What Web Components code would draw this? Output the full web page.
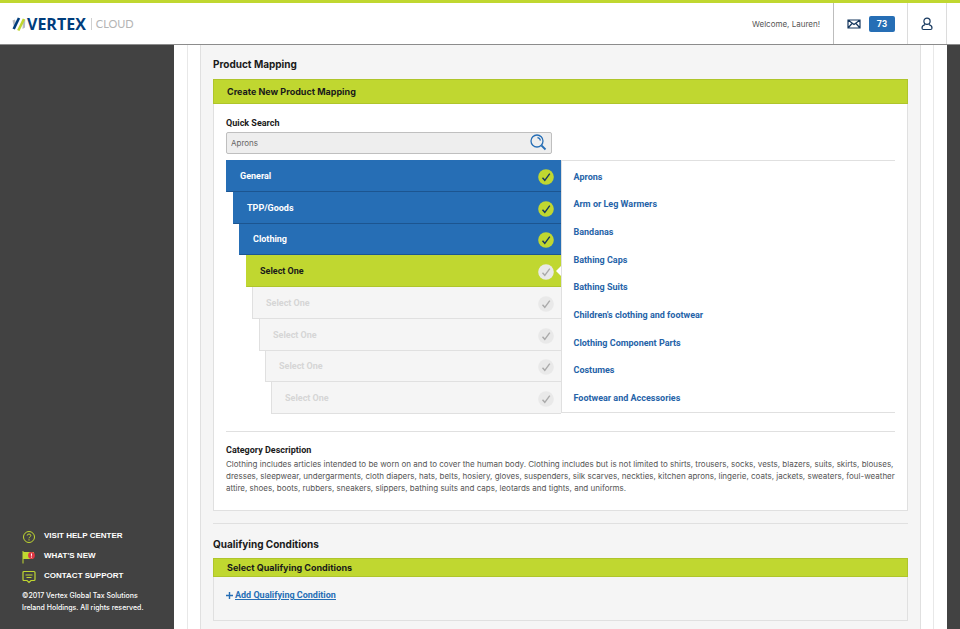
<!DOCTYPE html>
<html lang="en">
<head>
<meta charset="utf-8">
<title>Vertex Cloud – Product Mapping</title>
<style>
  html, body { margin: 0; height: 100%; }
  body {
    --lime: #c0d730; --lime-edge: #afc52b; --blue: #266eb5; --navy: #003d7c;
    --line: #e0e0e0; --panel: #f5f5f5; --dark: #424242; --ink: #1a1a1a;
    --heading: Inter, "Open Sans", sans-serif;
    --copy: Inter, "Liberation Sans", sans-serif;
    font: 9px/12px Roboto, "Liberation Sans", sans-serif;
    color: var(--ink);
    background: var(--dark);
  }
</style>
</head>
<body>
<app-shell>
  <app-header slot="header" user="Lauren" messages="73"></app-header>
  <side-bar slot="side"></side-bar>
  <page-section heading="Product Mapping">
    <title-card label="Create New Product Mapping" tone="white">
      <quick-search value="Aprons"></quick-search>
      <category-picker>
        <category-step slot="step" state="done" indent="0">General</category-step>
        <category-step slot="step" state="done" indent="7">TPP/Goods</category-step>
        <category-step slot="step" state="done" indent="13">Clothing</category-step>
        <category-step slot="step" state="current" indent="20">Select One</category-step>
        <category-step slot="step" state="idle" indent="26">Select One</category-step>
        <category-step slot="step" state="idle" indent="33">Select One</category-step>
        <category-step slot="step" state="idle" indent="39">Select One</category-step>
        <category-step slot="step" state="idle" indent="45">Select One</category-step>
        <category-option>Aprons</category-option>
        <category-option>Arm or Leg Warmers</category-option>
        <category-option>Bandanas</category-option>
        <category-option>Bathing Caps</category-option>
        <category-option>Bathing Suits</category-option>
        <category-option>Children's clothing and footwear</category-option>
        <category-option>Clothing Component Parts</category-option>
        <category-option>Costumes</category-option>
        <category-option>Footwear and Accessories</category-option>
      </category-picker>
      <category-description heading="Category Description">Clothing includes articles intended to be worn on and to cover the human body. Clothing includes but is not limited to shirts, trousers, socks, vests, blazers, suits, skirts, blouses, dresses, sleepwear, undergarments, cloth diapers, hats, belts, hosiery, gloves, suspenders, silk scarves, neckties, kitchen aprons, lingerie, coats, jackets, sweaters, foul-weather attire, shoes, boots, rubbers, sneakers, slippers, bathing suits and caps, leotards and tights, and uniforms.</category-description>
    </title-card>
  </page-section>
  <page-section heading="Qualifying Conditions" divided>
    <title-card label="Select Qualifying Conditions" compact>
      <add-link>Add Qualifying Condition</add-link>
    </title-card>
  </page-section>
</app-shell>

<script>
const define = (name, render) => customElements.define(name, class extends HTMLElement {
  connectedCallback() {
    if (this.shadowRoot) return;
    this.attachShadow({ mode: 'open' }).innerHTML = '<style>*{box-sizing:border-box}</style>' + render(this);
  }
});

define('app-shell', () => `
  <style>
    :host { display: grid; grid-template: auto minmax(0, 1fr) / 174px minmax(0, 1fr); height: 100vh; overflow: hidden; }
    ::slotted([slot=header]) { grid-column: 1 / -1; }
    main { margin-right: 13px; padding: 0 13px; background: #fff; overflow: hidden; }
    .frame { min-height: 100%; padding: 0 12px; border: solid #e8e8e8; border-width: 0 1px; }
    .panel { min-height: 720px; padding: 12px 12px 0; background: var(--panel); border: solid var(--line); border-width: 0 1px; }
  </style>
  <slot name="header"></slot>
  <slot name="side"></slot>
  <main><div class="frame"><div class="panel"><slot></slot></div></div></main>`);

define('app-header', el => `
  <style>
    :host { display: flex; align-items: stretch; height: 45px; box-sizing: border-box; background: #fff;
      border-top: 3px solid var(--lime); border-bottom: 1px solid #8c8c8c; }
    .brand { display: flex; align-items: center; margin-left: 12px; text-decoration: none; color: #b4b4b4; }
    .brand svg { margin-right: 1px; }
    .brand b { font: 700 16px/20px "Open Sans", "Noto Sans", sans-serif; color: var(--navy); }
    .cloud { margin-left: 5px; padding-left: 4px; border-left: 1px solid #d0d0d0; font: 400 11px/12px Lato, sans-serif; }
    .welcome { margin-left: auto; align-self: center; padding-right: 13px; color: #555; font: 8px/12px var(--copy); }
    button { display: flex; align-items: center; gap: 8px; padding: 0 12px; border: 0; border-left: 1px solid #dcdcdc;
      background: none; font: inherit; }
    .mail { width: 74px; padding-left: 13px; border-color: #bdbdbd; }
    .user { width: 40px; margin-right: 13px; border-right: 1px solid #dcdcdc; }
    .count { width: 26px; border-radius: 2px; background: var(--blue); color: #fff; font-weight: 700; line-height: 16px; text-align: center; }
  </style>
  <a class="brand" href="#" aria-label="Vertex Cloud">
    <svg width="14" height="16" viewBox="0 0 14 16"><path d="M.5 4.500 3 3.500 4 8 2 11.500Z" fill="#b9bec5"/><path d="M11 4.500 13.300 3.500 13 11.500 10.500 13Z" fill="#b9bec5"/><path d="M1.700 13 7 2" stroke="#003d7c" stroke-width="2.600"/><path d="M6.300 14.500 12 3" stroke="#c0d730" stroke-width="2.600"/></svg>
    <b>VERTEX</b><span class="cloud">CLOUD</span>
  </a>
  <span class="welcome">Welcome, ${el.getAttribute('user')}!</span>
  <button class="mail" aria-label="Messages">
    <svg width="14" height="10" viewBox="0 0 14 10" fill="none" stroke="#16385f" stroke-width="1.200"><path d="M1 1h12v8H1ZM1 1l6 4.500L13 1M1 9l4-4.500M13 9 9 4.500"/></svg>
    <span class="count">${el.getAttribute('messages')}</span>
  </button>
  <button class="user" aria-label="Account">
    <svg width="14" height="14" viewBox="0 0 14 14" fill="none" stroke="#16385f" stroke-width="1.200"><circle cx="7" cy="4.200" r="3.100"/><path d="M5 7.600C3 8.200 2 9.500 2 11q0 1.500 1.500 1.500h7Q12 12.500 12 11c0-1.500-1-2.800-3-3.400"/></svg>
  </button>`);

define('side-bar', () => `
  <style>
    :host { display: flex; flex-direction: column; justify-content: flex-end; padding: 0 22px 15px; background: var(--dark); color: #fff; }
    nav { display: grid; }
    a { display: grid; grid-template-columns: 14px 1fr; column-gap: 8px; align-items: center; height: 20px; color: inherit; font: 700 8px/12px "Liberation Sans", Arial, sans-serif; text-decoration: none; white-space: nowrap; }
    a svg { margin-top: 2px; }
    p { margin: 4px 0 0; white-space: nowrap; font: 500 7px/12px var(--copy); }
  </style>
  <nav>
    <a href="#"><svg width="14" height="14" viewBox="0 0 14 14" fill="none" stroke="#c0d730"><circle cx="7" cy="7" r="5.500"/><path d="M5.200 5.600Q5.300 4 7 4t1.800 1.500Q8.800 6.300 7.800 7 7 7.500 7 8.300M7 9.300v1.200"/></svg>VISIT HELP CENTER</a>
    <a href="#"><svg width="14" height="14" viewBox="0 0 14 14"><path d="M.5 1h1v12.500h-1ZM1 2h11v1.500L11 9H1Z" fill="#c0d730"/><circle cx="9.500" cy="5.500" r="3.400" fill="#dc3545"/><path d="M9.500 3.500v2.300M9.500 6.600v1" stroke="#fff"/></svg>WHAT'S NEW</a>
    <a href="#"><svg width="14" height="14" viewBox="0 0 14 14" fill="none" stroke="#c0d730" stroke-width="1.200"><path d="M2 1.500h10q1 0 1 1v7q0 1-1 1H9l-2 2-2-2H2q-1 0-1-1v-7q0-1 1-1ZM3.500 5h7M4.500 7.500h5"/></svg>CONTACT SUPPORT</a>
  </nav>
  <p>©2017 Vertex Global Tax Solutions<br>Ireland Holdings. All rights reserved.</p>`);

define('page-section', el => `
  <style>
    :host { display: block; }
    :host([divided]) { margin-top: 12px; padding-top: 13px; border-top: 1px solid var(--line); }
    h2 { margin: 0 0 8px; font: 700 10px/14px var(--heading); }
    :host([divided]) h2 { margin-bottom: 7px; }
  </style>
  <h2>${el.getAttribute('heading')}</h2><slot></slot>`);

define('title-card', el => `
  <style>
    :host { display: block; border: solid var(--line); border-width: 0 1px 1px; }
    :host([tone=white]) { background: #fff; }
    h3 { margin: 0 -1px; padding: 5px 13px; background: var(--lime); border: 1px solid var(--lime-edge); font: 700 9px/13px var(--heading); }
    :host([compact]) h3 { padding: 2px 13px; }
    .body { padding: 13px 12px 15px; }
    :host([compact]) .body { padding: 12px 12px 18px; }
  </style>
  <h3>${el.getAttribute('label')}</h3><div class="body"><slot></slot></div>`);

define('quick-search', el => `
  <style>
    :host { display: block; margin-bottom: 6px; }
    label { display: block; margin-bottom: 3px; font-weight: 700; }
    form { display: flex; width: 326px; height: 22px; border: 1px solid #bfbfbf; border-radius: 2px; background: #eee; }
    input { flex: 1; min-width: 0; padding: 0 4px; border: 0; background: none; font: 8px/12px var(--copy); color: #666; outline: none; }
    button { display: flex; padding: 0 4px; border: 0; background: none; }
  </style>
  <label for="q">Quick Search</label>
  <form><input id="q" type="text" value="${el.getAttribute('value')}">
    <button type="button" aria-label="Search"><svg width="18" height="18" viewBox="0 0 18 18" fill="none" stroke="#266eb5" stroke-width="1.300"><circle cx="8" cy="8" r="6"/><path d="M8.500 4.500Q11 5 11.500 7.500"/><path d="m12.500 12.500 4 4" stroke-width="1.800"/></svg></button>
  </form>`);

define('category-picker', () => `
  <style>
    :host { display: grid; grid-template-columns: minmax(0, 1fr) minmax(0, 1fr); min-height: 254px; }
    .steps { display: grid; grid-auto-rows: 1fr; }
    .options { display: grid; grid-auto-rows: 1fr; margin-bottom: 1px; padding: 2px 0 0 12px; border: solid var(--line); border-width: 1px 0 1px 1px; }
  </style>
  <div class="steps"><slot name="step"></slot></div>
  <div class="options"><slot></slot></div>`);

define('category-step', el => `
  <style>
    :host { display: grid; position: relative; margin-left: ${el.getAttribute('indent')}px;
      --bg: var(--panel); --edge: var(--line); --fg: #d6d6d6; --disc: #e9e9e9; --tick: #aaa; }
    :host([state=done]) { --bg: var(--blue); --edge: #1c5590; --fg: #fff; --disc: var(--lime); --tick: #16385f; }
    :host([state=current]) { --bg: var(--lime); --edge: var(--lime-edge); --fg: var(--ink); }
    :host([state=current])::after { content: ""; position: absolute; right: 0; top: 50%; margin-top: -5px;
      border: solid transparent; border-width: 5px 5px 5px 0; border-right-color: #fff; }
    button { display: flex; align-items: center; justify-content: space-between; padding: 1px 7px 0 13px; border: solid var(--edge); border-width: 0 0 1px 1px;
      background: var(--bg); color: var(--fg); font: inherit; font-weight: 700; text-align: left; }
    :host([state=done]) button, :host([state=current]) button { border-left-color: var(--bg); }
    svg { margin-top: 2px; }
  </style>
  <button type="button"${el.getAttribute('state') === 'idle' ? ' disabled' : ''}><slot></slot>
    <svg width="16" height="16" viewBox="0 0 16 16" fill="none"><circle cx="8" cy="8" r="7.800" fill="var(--disc)"/><path d="M4.500 8.700 6.800 11.300 11.800 4.700" stroke="var(--tick)" stroke-width="1.400"/></svg></button>`);

define('category-option', () => `
  <style>
    :host { display: flex; align-items: center; }
    a { color: #2563a8; font-weight: 700; text-decoration: none; }
  </style>
  <a href="#"><slot></slot></a>`);

define('category-description', el => `
  <style>
    :host { display: block; margin-top: 17px; padding-top: 12px; border-top: 1px solid var(--line); }
    h4 { margin: 0 0 2px; font-size: 9px; line-height: 12px; }
    p { margin: 0 0 1px; color: #555; font: 8px/12px var(--copy); }
  </style>
  <h4>${el.getAttribute('heading')}</h4><p><slot></slot></p>`);

define('add-link', () => `
  <style>
    :host { display: block; }
    a { display: inline-flex; align-items: center; gap: 2px; color: var(--blue); font-weight: 700; }
    span { text-decoration: underline; }
  </style>
  <a href="#"><svg width="7" height="7" viewBox="0 0 7 7" stroke="currentColor" stroke-width="1.400"><path d="M3.500 0v7M0 3.500h7"/></svg><span><slot></slot></span></a>`);
</script>
</body>
</html>
